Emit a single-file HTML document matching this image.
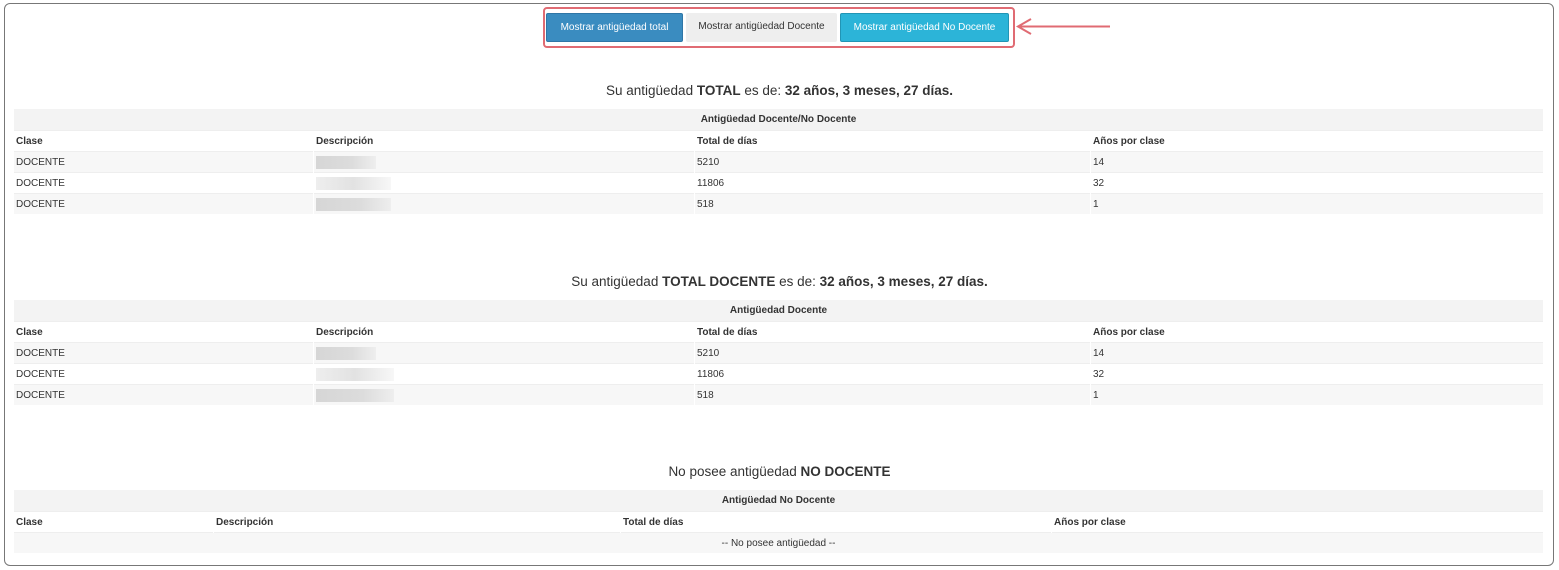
<!DOCTYPE html>
<html><head><meta charset="utf-8"><style>
*{box-sizing:border-box;margin:0;padding:0}
body{width:1559px;height:570px;background:#fff;font-family:"Liberation Sans",sans-serif;color:#333;position:relative;overflow:hidden}
.frame{position:absolute;left:4px;top:3px;width:1550px;height:563px;border:1px solid #777;border-radius:6px}
.hl{position:absolute;left:543px;top:7px;width:472px;height:41px;border:2px solid #e06b73;border-radius:4px}
.btn{position:absolute;top:13px;height:29px;font-size:10px;line-height:28px;text-align:center;border-radius:2px}
.b1{left:546px;width:137px;background:#3a8cc0;color:#fff;border:1px solid #2f76a6}
.b2{left:686px;width:151px;background:#eeeeee;color:#333}
.b3{left:840px;width:169px;background:#2cb4d8;color:#fff;border:1px solid #2295b5}
h3{position:absolute;left:0;width:1559px;text-align:center;font-size:13.5px;font-weight:normal;color:#333}
table{position:absolute;left:13px;width:1530px;border-collapse:collapse;font-size:10px;table-layout:fixed}
td,th{height:21px;padding:1px 2px 0;text-align:left;border-left:1px solid #fff;border-top:1px solid #eee;white-space:nowrap;overflow:hidden}
th{font-weight:bold}
tr.t th{background:#f3f3f3;text-align:center;border-top:none}
tr.g td{background:#f7f7f7}
.blur{display:inline-block;height:13px;vertical-align:middle;background:linear-gradient(90deg,#d6d6d6,#dcdcdc 60%,#eee)}
</style></head><body>
<div class="frame"></div>
<div class="hl"></div>
<div class="btn b1">Mostrar antigüedad total</div>
<div class="btn b2">Mostrar antigüedad Docente</div>
<div class="btn b3">Mostrar antigüedad No Docente</div>
<svg style="position:absolute;left:1010px;top:15px" width="110" height="24"><line x1="8" y1="11.5" x2="100" y2="11.5" stroke="#e06b73" stroke-width="2"/><path d="M21 4 L8 11.5 L21 19" fill="none" stroke="#e06b73" stroke-width="2"/></svg>

<h3 style="top:83px">Su antigüedad <b>TOTAL</b> es de: <b>32 años, 3 meses, 27 días.</b></h3>
<table style="top:109px">
<colgroup><col style="width:300px"><col style="width:381px"><col style="width:396px"><col></colgroup>
<tr class="t"><th colspan="4">Antigüedad Docente/No Docente</th></tr>
<tr><th>Clase</th><th>Descripción</th><th>Total de días</th><th>Años por clase</th></tr>
<tr class="g"><td>DOCENTE</td><td><span class="blur" style="width:60px"></span></td><td>5210</td><td>14</td></tr>
<tr><td>DOCENTE</td><td><span class="blur" style="width:75px;background:linear-gradient(90deg,#eee,#e2e2e2 50%,#f7f7f7)"></span></td><td>11806</td><td>32</td></tr>
<tr class="g"><td>DOCENTE</td><td><span class="blur" style="width:75px"></span></td><td>518</td><td>1</td></tr>
</table>

<h3 style="top:274px">Su antigüedad <b>TOTAL DOCENTE</b> es de: <b>32 años, 3 meses, 27 días.</b></h3>
<table style="top:300px">
<colgroup><col style="width:300px"><col style="width:381px"><col style="width:396px"><col></colgroup>
<tr class="t"><th colspan="4">Antigüedad Docente</th></tr>
<tr><th>Clase</th><th>Descripción</th><th>Total de días</th><th>Años por clase</th></tr>
<tr class="g"><td>DOCENTE</td><td><span class="blur" style="width:60px"></span></td><td>5210</td><td>14</td></tr>
<tr><td>DOCENTE</td><td><span class="blur" style="width:78px;background:linear-gradient(90deg,#eee,#e2e2e2 50%,#f7f7f7)"></span></td><td>11806</td><td>32</td></tr>
<tr class="g"><td>DOCENTE</td><td><span class="blur" style="width:78px"></span></td><td>518</td><td>1</td></tr>
</table>

<h3 style="top:464px">No posee antigüedad <b>NO DOCENTE</b></h3>
<table style="top:490px">
<colgroup><col style="width:200px"><col style="width:407px"><col style="width:431px"><col></colgroup>
<tr class="t"><th colspan="4">Antigüedad No Docente</th></tr>
<tr><th>Clase</th><th>Descripción</th><th>Total de días</th><th>Años por clase</th></tr>
<tr class="g"><td colspan="4" style="text-align:center">-- No posee antigüedad --</td></tr>
</table>
</body></html>
